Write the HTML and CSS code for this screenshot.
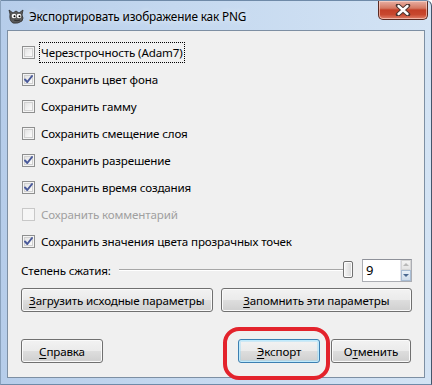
FILE: index.html
```html
<!DOCTYPE html>
<html lang="ru">
<head>
<meta charset="utf-8">
<title>Экспортировать изображение как PNG</title>
<link rel="stylesheet" href="styles.css">
</head>
<body>
<div class="window">
  <div class="titlebar">
    <svg class="app-icon" width="17" height="15" viewBox="0 0 17 15">
      <path d="M2 5 L1 1 L5 4 L8 2 L11 4 L15 1 L14 6 Q16 9 14 12 Q10 15 5 14 Q1 12 2 5 Z" fill="#5a5a5a" stroke="#2e2e2e" stroke-width="0.8"/>
      <circle cx="6" cy="7" r="2.3" fill="#fff"/>
      <circle cx="11" cy="7" r="2.3" fill="#fff"/>
      <circle cx="6.5" cy="7.3" r="1" fill="#000"/>
      <circle cx="11.5" cy="7.3" r="1" fill="#000"/>
      <path d="M6 11 Q9 12.5 12 11" fill="none" stroke="#222" stroke-width="0.8"/>
    </svg>
    <span class="title">Экспортировать изображение как PNG</span>
    <button class="close" aria-label="Закрыть">
      <svg width="16" height="12" viewBox="0 0 16 12">
        <path d="M3 1.5 L13 10.5 M13 1.5 L3 10.5" fill="none" stroke="#4a3430" stroke-width="4.4" stroke-linecap="round"/>
        <path d="M3.5 2 L12.5 10 M12.5 2 L3.5 10" fill="none" stroke="#fff" stroke-width="2.4" stroke-linecap="round"/>
      </svg>
    </button>
  </div>

  <div class="client">
    <ul class="options">
      <li class="option">
        <span class="check"></span>
        <span class="label focus">Черезстрочность (Adam7)</span>
      </li>
      <li class="option">
        <span class="check checked"><svg viewBox="0 0 11 11"><path d="M2 5.5 L4.3 8 L9 2" /></svg></span>
        <span class="label">Сохранить цвет фона</span>
      </li>
      <li class="option">
        <span class="check"></span>
        <span class="label">Сохранить гамму</span>
      </li>
      <li class="option">
        <span class="check"></span>
        <span class="label">Сохранить смещение слоя</span>
      </li>
      <li class="option">
        <span class="check checked"><svg viewBox="0 0 11 11"><path d="M2 5.5 L4.3 8 L9 2" /></svg></span>
        <span class="label">Сохранить разрешение</span>
      </li>
      <li class="option">
        <span class="check checked"><svg viewBox="0 0 11 11"><path d="M2 5.5 L4.3 8 L9 2" /></svg></span>
        <span class="label">Сохранить время создания</span>
      </li>
      <li class="option disabled">
        <span class="check"></span>
        <span class="label">Сохранить комментарий</span>
      </li>
      <li class="option">
        <span class="check checked"><svg viewBox="0 0 11 11"><path d="M2 5.5 L4.3 8 L9 2" /></svg></span>
        <span class="label">Сохранить значения цвета прозрачных точек</span>
      </li>
    </ul>

    <div class="compression">
      <span class="comp-label">Степень сжатия:</span>
      <div class="slider">
        <div class="track"></div>
        <div class="thumb"></div>
      </div>
      <div class="spin">
        <span class="spin-value">9</span>
        <div class="spin-arrows">
          <span class="arrow up"></span>
          <span class="arrow down"></span>
        </div>
      </div>
    </div>

    <div class="param-buttons">
      <button class="btn"><u>З</u>агрузить исходные параметры</button>
      <button class="btn"><u>З</u>апомнить эти параметры</button>
    </div>

    <div class="dialog-buttons">
      <button class="btn help"><u>С</u>правка</button>
      <span class="spacer"></span>
      <button class="btn default export"><u>Э</u>кспорт</button>
      <button class="btn cancel">О<u>т</u>менить</button>
    </div>
  </div>

  <div class="highlight"></div>
</div>
</body>
</html>
```

FILE: styles.css
```css
* {
  box-sizing: border-box;
}

html, body {
  margin: 0;
  padding: 0;
  background: #ffffff;
}

body {
  font-family: "Noto Sans", "Open Sans", sans-serif;
  font-size: 11.6px;
  letter-spacing: -0.15px;
  color: #000;
}

.window {
  position: relative;
  width: 432px;
  height: 385px;
  display: flex;
  flex-direction: column;
  background: linear-gradient(90deg, #b6cdea 0%, #c4d8ef 40%, #d3e3f4 100%);
  border-top: 1px solid #6f8aa8;
  border-left: 1px solid #8aa2bd;
  border-right: 1px solid #44556a;
  border-bottom: 1px solid #6f8aa8;
  border-radius: 0 6px 0 0;
  overflow: hidden;
}

.titlebar {
  height: 29px;
  display: flex;
  align-items: center;
  padding-left: 7px;
  position: relative;
}

.app-icon {
  flex: none;
  margin-top: 2px;
}

.title {
  margin-left: 4px;
  margin-top: 1px;
  font-size: 11.8px;
  color: #000;
  text-shadow: 0 0 6px rgba(255, 255, 255, 0.9);
}

.close {
  margin-left: auto;
  margin-right: 3px;
  align-self: flex-start;
  width: 50px;
  height: 19px;
  padding: 0;
  border: 1px solid #5a2a22;
  border-top: none;
  border-radius: 0 0 5px 5px;
  background: linear-gradient(#e8b0a4 0%, #d47862 40%, #c33f27 50%, #c8482f 75%, #e0806a 100%);
  box-shadow: inset 0 0 0 1px rgba(255, 220, 210, 0.6);
  display: flex;
  align-items: center;
  justify-content: center;
}

.client {
  margin-left: 6px;
  width: 418px;
  height: 348px;
  background: #f0f0f0;
  border: 1px solid #7d8fa3;
  display: flex;
  flex-direction: column;
  padding: 8px 12px 0 13px;
}

.options {
  list-style: none;
  margin: 0;
  padding: 0;
}

.option {
  height: 27px;
  display: flex;
  align-items: center;
  padding-left: 1px;
}

.check {
  width: 13px;
  height: 13px;
  flex: none;
  border: 1px solid #8e8f8f;
  background: linear-gradient(135deg, #dcdcdc 0%, #f4f4f4 60%, #ffffff 100%);
  box-shadow: inset 0 0 0 1px #f4f4f4, inset 0 0 0 2px #d0d0d0;
  margin-right: 4px;
  display: flex;
  align-items: center;
  justify-content: center;
}

.check svg {
  width: 11px;
  height: 11px;
}

.check svg path {
  fill: none;
  stroke: #4a5a9a;
  stroke-width: 2;
  stroke-linecap: round;
  stroke-linejoin: round;
}

.label {
  padding: 1px;
  border: 1px dotted transparent;
  line-height: 17px;
  white-space: nowrap;
}

.label.focus {
  border-color: #000;
}

.disabled .check {
  border-color: #c8c8c8;
  background: #f6f6f6;
  box-shadow: none;
}

.disabled .label {
  color: #a0a0a0;
}

.compression {
  height: 24px;
  margin-top: 3px;
  display: flex;
  align-items: center;
}

.comp-label {
  white-space: nowrap;
}

.slider {
  flex: 1;
  margin-left: 8px;
  height: 24px;
  position: relative;
  display: flex;
  align-items: center;
}

.track {
  width: 100%;
  height: 2px;
  background: #a7a7a7;
  border-bottom: 1px solid #ffffff;
}

.thumb {
  position: absolute;
  right: 0;
  top: 3px;
  width: 10px;
  height: 17px;
  border: 1px solid #707070;
  border-radius: 2px;
  background: linear-gradient(90deg, #f6f6f6 0%, #e6e6e6 50%, #d6d6d6 100%);
  box-shadow: inset 0 0 0 1px #fbfbfb;
}

.spin {
  margin-left: 9px;
  width: 50px;
  height: 23px;
  display: flex;
  border: 1px solid #abadb3;
  border-top-color: #8e9199;
  background: #ffffff;
}

.spin-value {
  flex: 1;
  padding-left: 3px;
  line-height: 21px;
  font-size: 13px;
}

.spin-arrows {
  width: 11px;
  display: flex;
  flex-direction: column;
  border-left: 1px solid #e2e3ea;
}

.arrow {
  flex: 1;
  display: flex;
  align-items: center;
  justify-content: center;
  background: linear-gradient(#f3f3f3, #e4e4e4);
  border: 1px solid #d5d5d5;
}

.arrow::after {
  content: "";
  width: 0;
  height: 0;
  border-left: 3px solid transparent;
  border-right: 3px solid transparent;
}

.arrow.up::after {
  border-bottom: 3px solid #b8b8b8;
}

.arrow.down {
  background: linear-gradient(#e8f0f8, #cfdcea);
  border-color: #a8bcd3;
}

.arrow.down::after {
  border-top: 3px solid #4a6890;
}

.btn {
  font-family: inherit;
  font-size: 11.6px;
  letter-spacing: -0.15px;
  color: #000;
  height: 24px;
  padding: 0 6px;
  border: 1px solid #707070;
  border-radius: 3px;
  background: linear-gradient(#f2f2f2 0%, #ebebeb 48%, #dddddd 52%, #cfcfcf 100%);
  box-shadow: inset 0 0 0 1px #fafafa;
  white-space: nowrap;
}

.btn u {
  text-decoration-thickness: 1px;
  text-underline-offset: 2px;
}

.param-buttons {
  margin-top: 6px;
  display: flex;
  gap: 8px;
}

.param-buttons .btn {
  flex: 1;
}

.dialog-buttons {
  margin-top: 27px;
  display: flex;
  align-items: center;
}

.spacer {
  flex: 1;
}

.help {
  width: 82px;
}

.export {
  width: 82px;
}

.cancel {
  width: 80px;
  margin-left: 11px;
  margin-right: 1px;
}

.btn.default {
  border-color: #3c7fb1;
  box-shadow: inset 0 0 0 1px #bfeafc, inset 0 0 0 2px rgba(140, 215, 250, 0.35);
}

.highlight {
  position: absolute;
  left: 222px;
  top: 326px;
  width: 107px;
  height: 53px;
  border: 4px solid #e3232c;
  border-radius: 16px;
  pointer-events: none;
}
```
